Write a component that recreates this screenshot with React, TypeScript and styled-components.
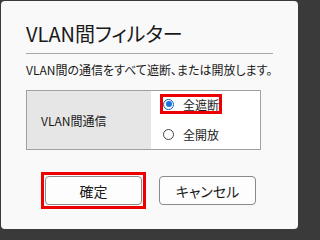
import React from "react";
import styled, { createGlobalStyle } from "styled-components";

const GlobalStyle = createGlobalStyle`
  html, body {
    margin: 0;
    padding: 0;
    background: #3a3a3a;
  }
  body {
    font-family: "Noto Sans CJK JP", "Noto Sans", sans-serif;
    color: #1a1a1a;
  }
`;

const Frame = styled.div`
  width: 300px;
  height: 231px;
  box-sizing: border-box;
  padding: 1px 2px 2px 1px;
  background: #3a3a3a;
`;

const Dialog = styled.div`
  height: 100%;
  box-sizing: border-box;
  background: #f9f9f9;
  border-radius: 4px;
  padding: 21px 25px 0 25px;
  display: flex;
  flex-direction: column;
`;

const Title = styled.h1`
  margin: 0;
  font-size: 20px;
  font-weight: 400;
  line-height: 24px;
  font-feature-settings: "palt";
  color: #1a1a1a;
`;

const Rule = styled.hr`
  margin: 7px 0 0;
  border: none;
  border-top: 1px solid #a8a8a8;
`;

const Description = styled.p`
  margin: 8px 0 0;
  font-size: 12px;
  line-height: 16px;
  font-feature-settings: "palt";
`;

const Table = styled.div`
  margin: 12px 12px 0 0;
  border: 1px solid #a0a0a0;
  display: grid;
  grid-template-columns: 124px 1fr;
  height: 60px;
  box-sizing: border-box;
`;

const HeadCell = styled.div`
  background: #e6e6e6;
  display: flex;
  align-items: center;
  padding-left: 14px;
  font-size: 12px;
  font-feature-settings: "palt";
`;

const OptionCell = styled.div`
  background: #ffffff;
  display: flex;
  flex-direction: column;
  align-items: flex-start;
  gap: 10px;
  padding: 3px 0 0 9px;
`;

const Option = styled.label<{ highlighted?: boolean }>`
  display: flex;
  align-items: center;
  gap: 9px;
  height: 20px;
  padding: 0 3px 0 3px;
  font-size: 12px;
  box-sizing: border-box;
  ${(p) => (p.highlighted ? `outline: 3px solid #ee0000; outline-offset: -3px;` : ``)}
`;

const Radio = styled.span<{ checked?: boolean }>`
  width: 11px;
  height: 11px;
  box-sizing: border-box;
  border-radius: 50%;
  background: #ffffff;
  border: 1px solid ${(p) => (p.checked ? "#0067c0" : "#444444")};
  position: relative;
  ${(p) =>
    p.checked
      ? `&::after {
          content: "";
          position: absolute;
          left: 1.5px;
          top: 1.5px;
          width: 6px;
          height: 6px;
          border-radius: 50%;
          background: #1a73d9;
        }`
      : ``}
`;

const Buttons = styled.div`
  margin-top: 22px;
  display: flex;
  align-items: center;
  gap: 13px;
  padding-left: 15px;
`;

const Highlight = styled.div`
  border: 3px solid #ee0000;
  padding: 1px;
  display: flex;
`;

const Button = styled.button`
  width: 97px;
  height: 29px;
  box-sizing: border-box;
  background: #fdfdfd;
  border: 1px solid #8a8a8a;
  border-radius: 4px;
  font-family: "Noto Sans CJK JP", "Noto Sans", sans-serif;
  font-size: 14px;
  font-feature-settings: "palt";
  color: #1a1a1a;
  padding: 0;
`;

export default function App() {
  return (
    <Frame>
      <GlobalStyle />
      <Dialog>
        <Title>VLAN間フィルター</Title>
        <Rule />
        <Description>VLAN間の通信をすべて遮断、または開放します。</Description>
        <Table>
          <HeadCell>VLAN間通信</HeadCell>
          <OptionCell>
            <Option highlighted>
              <Radio checked />
              全遮断
            </Option>
            <Option>
              <Radio />
              全開放
            </Option>
          </OptionCell>
        </Table>
        <Buttons>
          <Highlight>
            <Button>確定</Button>
          </Highlight>
          <Button>キャンセル</Button>
        </Buttons>
      </Dialog>
    </Frame>
  );
}
